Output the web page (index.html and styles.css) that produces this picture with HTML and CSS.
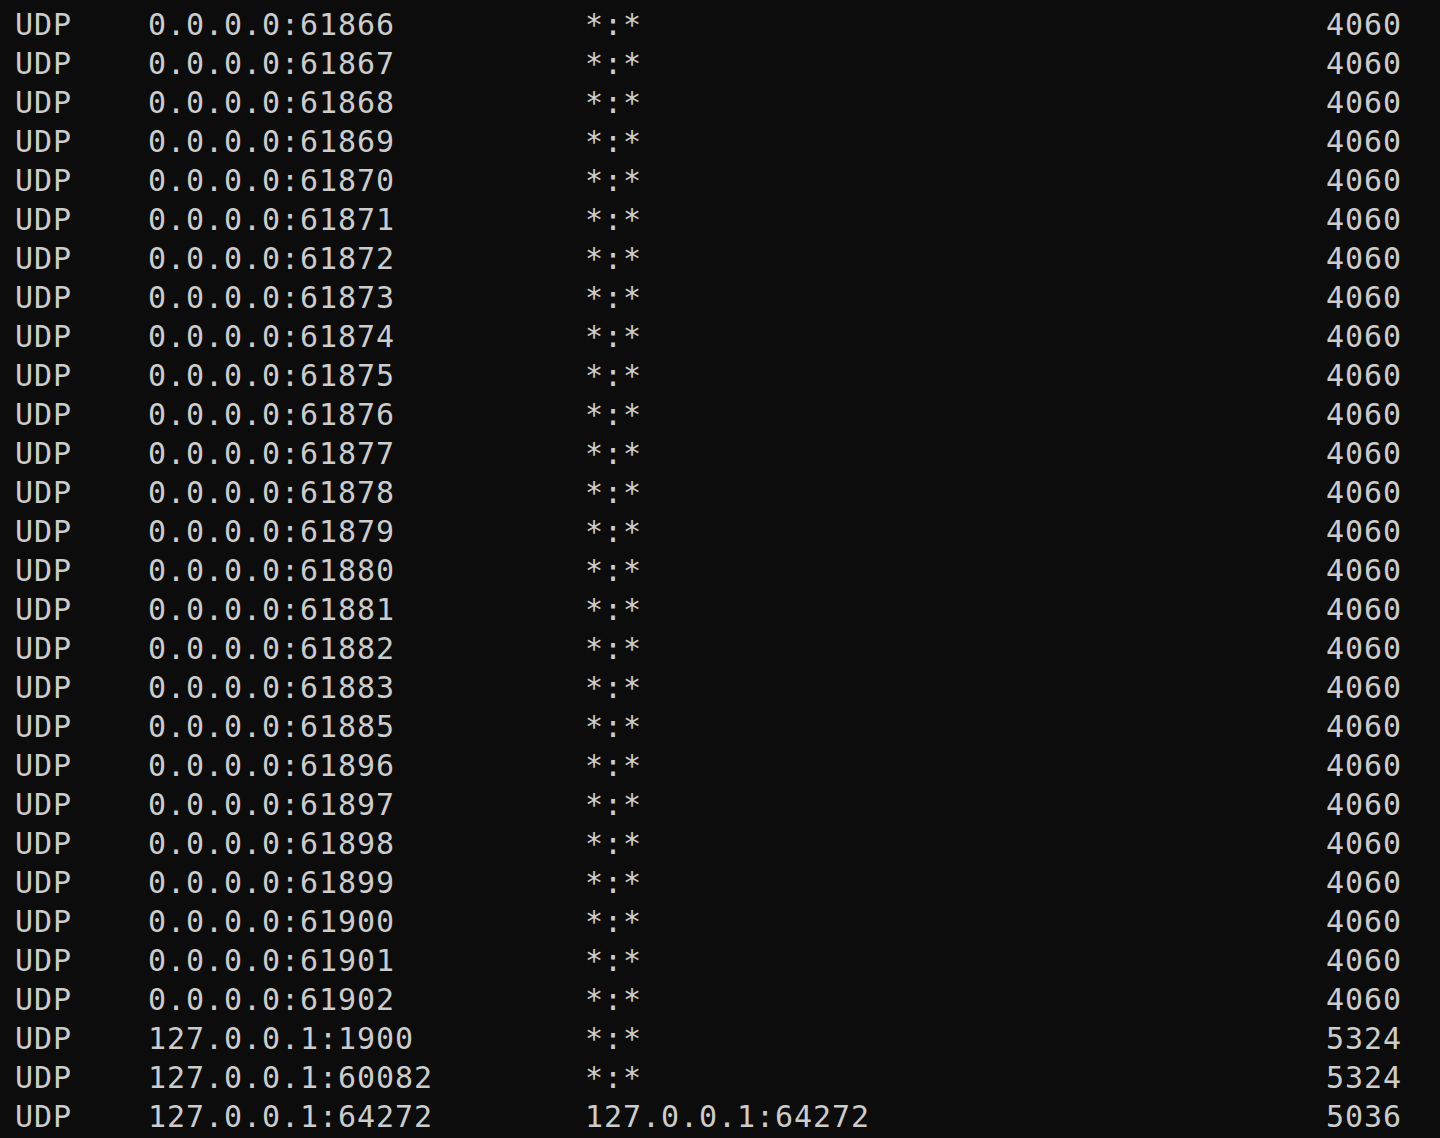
FILE: index.html
```html
<!DOCTYPE html>
<html lang="en">
<head>
<meta charset="utf-8">
<title>netstat</title>
<link rel="stylesheet" href="styles.css">
</head>
<body>
<pre class="terminal">UDP    0.0.0.0:61866          *:*                                    4060
UDP    0.0.0.0:61867          *:*                                    4060
UDP    0.0.0.0:61868          *:*                                    4060
UDP    0.0.0.0:61869          *:*                                    4060
UDP    0.0.0.0:61870          *:*                                    4060
UDP    0.0.0.0:61871          *:*                                    4060
UDP    0.0.0.0:61872          *:*                                    4060
UDP    0.0.0.0:61873          *:*                                    4060
UDP    0.0.0.0:61874          *:*                                    4060
UDP    0.0.0.0:61875          *:*                                    4060
UDP    0.0.0.0:61876          *:*                                    4060
UDP    0.0.0.0:61877          *:*                                    4060
UDP    0.0.0.0:61878          *:*                                    4060
UDP    0.0.0.0:61879          *:*                                    4060
UDP    0.0.0.0:61880          *:*                                    4060
UDP    0.0.0.0:61881          *:*                                    4060
UDP    0.0.0.0:61882          *:*                                    4060
UDP    0.0.0.0:61883          *:*                                    4060
UDP    0.0.0.0:61885          *:*                                    4060
UDP    0.0.0.0:61896          *:*                                    4060
UDP    0.0.0.0:61897          *:*                                    4060
UDP    0.0.0.0:61898          *:*                                    4060
UDP    0.0.0.0:61899          *:*                                    4060
UDP    0.0.0.0:61900          *:*                                    4060
UDP    0.0.0.0:61901          *:*                                    4060
UDP    0.0.0.0:61902          *:*                                    4060
UDP    127.0.0.1:1900         *:*                                    5324
UDP    127.0.0.1:60082        *:*                                    5324
UDP    127.0.0.1:64272        127.0.0.1:64272                        5036</pre>
</body>
</html>
```

FILE: styles.css
```css
html, body {
  margin: 0;
  padding: 0;
  background: #0c0c0c;
  height: 100%;
  overflow: hidden;
}

.terminal {
  margin: 0;
  padding: 5px 0 0 15px;
  font-family: "DejaVu Sans Mono", monospace;
  font-size: 30px;
  letter-spacing: 0.94px;
  line-height: 39px;
  color: #cccccc;
  white-space: pre;
}
```
